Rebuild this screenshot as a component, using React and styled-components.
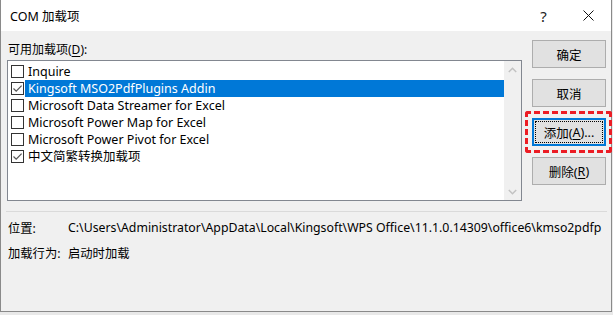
import React from "react";
import styled, { createGlobalStyle } from "styled-components";

const addins = [
  { id: 1, name: "Inquire", checked: false },
  { id: 2, name: "Kingsoft MSO2PdfPlugins Addin", checked: true, selected: true },
  { id: 3, name: "Microsoft Data Streamer for Excel", checked: false },
  { id: 4, name: "Microsoft Power Map for Excel", checked: false },
  { id: 5, name: "Microsoft Power Pivot for Excel", checked: false },
  { id: 6, name: "中文简繁转换加载项", checked: true },
];

const GlobalStyle = createGlobalStyle`
  html, body {
    margin: 0;
    padding: 0;
    background: #e9e9e9;
  }
  body {
    font-family: "Noto Sans", "Noto Sans CJK SC", sans-serif;
    font-size: 12px;
    color: #000;
  }
`;

const Window = styled.div`
  width: 612px;
  height: 312px;
  box-sizing: border-box;
  background: #f0f0f0;
  border: 1px solid #8a8a8a;
  border-top: none;
  display: flex;
  flex-direction: column;
`;

const TitleBar = styled.div`
  height: 31px;
  flex-shrink: 0;
  background: #fff;
  display: flex;
  align-items: center;
  padding-left: 9px;
`;

const Title = styled.span`
  flex: 1;
  font-size: 12.5px;
`;

const Caption = styled.div`
  width: 45px;
  height: 31px;
  display: flex;
  align-items: center;
  justify-content: center;
  font-size: 15px;
  color: #222;
`;

const Body = styled.div`
  flex: 1;
  padding: 9px 5px 0 6px;
  display: flex;
  flex-direction: column;
`;

const Top = styled.div`
  display: flex;
  gap: 10px;
`;

const LeftCol = styled.div`
  flex: 1;
  display: flex;
  flex-direction: column;
`;

const Label = styled.div`
  height: 20px;
  line-height: 19px;
  padding-left: 1px;
`;

const Mnemonic = styled.span`
  text-decoration: underline;
  text-underline-offset: 2px;
`;

const ListBox = styled.div`
  height: 141px;
  box-sizing: border-box;
  border: 1px solid #828790;
  background: #fff;
  display: flex;
`;

const Items = styled.div`
  flex: 1;
  padding-top: 2px;
`;

const Row = styled.div`
  height: 17px;
  display: flex;
  align-items: center;
  padding-left: 3px;
`;

const Box = styled.span`
  width: 13px;
  height: 13px;
  box-sizing: border-box;
  border: 1px solid #333;
  background: #fff;
  display: flex;
  align-items: center;
  justify-content: center;
  flex-shrink: 0;
`;

const ItemText = styled.span`
  flex: 1;
  height: 17px;
  line-height: 17px;
  margin-left: 1px;
  padding-left: 3px;
  font-size: 12.5px;
  white-space: nowrap;
  background: ${(p) => (p.$selected ? "#0078d7" : "transparent")};
  color: ${(p) => (p.$selected ? "#fff" : "#000")};
`;

const ScrollBar = styled.div`
  width: 17px;
  background: #f0f0f0;
  display: flex;
  flex-direction: column;
  justify-content: space-between;
  align-items: center;
  padding: 6px 0 5px;
`;

const Buttons = styled.div`
  width: 74px;
  display: flex;
  flex-direction: column;
  gap: 11px;
`;

const Button = styled.div`
  height: 28px;
  box-sizing: border-box;
  background: #e1e1e1;
  border: ${(p) => (p.$focused ? "2px solid #0078d7" : "1px solid #adadad")};
  display: flex;
  align-items: center;
  justify-content: center;
  position: relative;
  font-size: 12.5px;

  ${(p) =>
    p.$focused &&
    `&::after {
      content: "";
      position: absolute;
      inset: 1px;
      border: 1px dotted #000;
    }`}
`;

const Marked = styled.div`
  position: relative;
`;

const RedMark = styled.div`
  position: absolute;
  top: -7px;
  left: -7px;
  right: -6px;
  bottom: -7px;
  border: 3px dashed #ec1c24;
  border-radius: 3px;
`;

const Separator = styled.div`
  height: 1px;
  margin: 10px -1px 0 -1px;
  background: #dadada;
`;

const Info = styled.div`
  margin-top: 3px;
  display: grid;
  grid-template-columns: 60px 540px;
  grid-auto-rows: 25px;
  align-items: center;
  padding-left: 1px;
  font-size: 12.3px;
`;

const InfoValue = styled.span`
  white-space: nowrap;
`;

const Check = () => (
  <svg width="11" height="11" viewBox="0 0 11 11">
    <path d="M1.5 5.5 L4.2 8.2 L9.6 2.6" fill="none" stroke="#555" strokeWidth="1.2" />
  </svg>
);

const Chevron = ({ up }) => (
  <svg width="9" height="6" viewBox="0 0 9 6">
    <path
      d={up ? "M0.8 5 L4.5 1.3 L8.2 5" : "M0.8 1 L4.5 4.7 L8.2 1"}
      fill="none"
      stroke="#c2c2c2"
      strokeWidth="1.5"
    />
  </svg>
);

const Close = () => (
  <svg width="11" height="11" viewBox="0 0 11 11">
    <path d="M0.5 0.5 L10.5 10.5 M10.5 0.5 L0.5 10.5" stroke="#111" strokeWidth="1" />
  </svg>
);

const App = () => {
  return (
    <>
      <GlobalStyle />
      <Window>
        <TitleBar>
          <Title>COM 加载项</Title>
          <Caption>?</Caption>
          <Caption>
            <Close />
          </Caption>
        </TitleBar>
        <Body>
          <Top>
            <LeftCol>
              <Label>
                可用加载项(<Mnemonic>D</Mnemonic>):
              </Label>
              <ListBox>
                <Items>
                  {addins.map((item) => (
                    <Row key={item.id}>
                      <Box>{item.checked && <Check />}</Box>
                      <ItemText $selected={item.selected}>{item.name}</ItemText>
                    </Row>
                  ))}
                </Items>
                <ScrollBar>
                  <Chevron up />
                  <Chevron />
                </ScrollBar>
              </ListBox>
            </LeftCol>
            <Buttons>
              <Button>确定</Button>
              <Button>取消</Button>
              <Marked>
                <Button $focused>
                  添加(<Mnemonic>A</Mnemonic>)...
                </Button>
                <RedMark />
              </Marked>
              <Button>
                删除(<Mnemonic>R</Mnemonic>)
              </Button>
            </Buttons>
          </Top>
          <Separator />
          <Info>
            <span>位置:</span>
            <InfoValue>
              C:\Users\Administrator\AppData\Local\Kingsoft\WPS Office\11.1.0.14309\office6\kmso2pdfp
            </InfoValue>
            <span>加载行为:</span>
            <InfoValue>启动时加载</InfoValue>
          </Info>
        </Body>
      </Window>
    </>
  );
};

export default App;
